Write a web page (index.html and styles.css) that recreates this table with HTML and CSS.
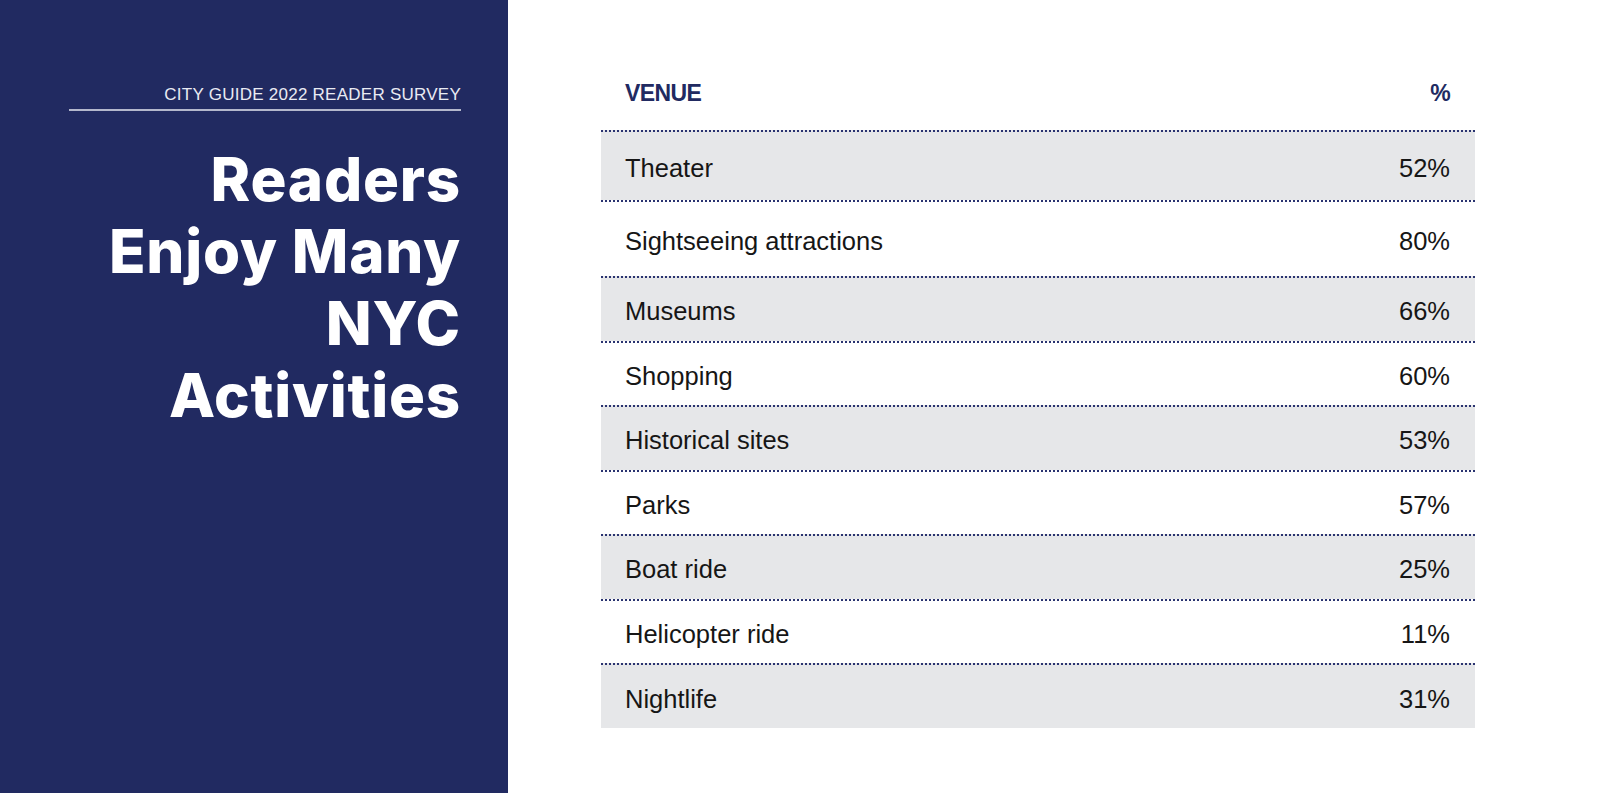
FILE: index.html
```html
<!DOCTYPE html>
<html lang="en">
<head>
<meta charset="utf-8">
<title>Readers Enjoy Many NYC Activities</title>
<link rel="stylesheet" href="styles.css">
</head>
<body>
<div class="page">
  <aside class="panel">
    <div class="kicker">CITY GUIDE 2022 READER SURVEY</div>
    <h1 class="title">Readers<br>Enjoy Many<br>NYC<br>Activities</h1>
  </aside>
  <main class="content">
    <div class="table">
      <div class="thead">
        <span>VENUE</span>
        <span>%</span>
      </div>
      <div class="row shade r1"><span>Theater</span><span>52%</span></div>
      <div class="row r2"><span>Sightseeing attractions</span><span>80%</span></div>
      <div class="row shade"><span>Museums</span><span>66%</span></div>
      <div class="row"><span>Shopping</span><span>60%</span></div>
      <div class="row shade"><span>Historical sites</span><span>53%</span></div>
      <div class="row"><span>Parks</span><span>57%</span></div>
      <div class="row shade"><span>Boat ride</span><span>25%</span></div>
      <div class="row"><span>Helicopter ride</span><span>11%</span></div>
      <div class="row shade last"><span>Nightlife</span><span>31%</span></div>
    </div>
  </main>
</div>
</body>
</html>
```

FILE: styles.css
```css
* { box-sizing: border-box; }
html, body { margin: 0; padding: 0; background: #ffffff; }
body { width: 1600px; height: 793px; overflow: hidden; }

.page {
  display: flex;
  height: 793px;
}

.panel {
  width: 508px;
  flex: none;
  background: #212a61;
  padding: 85px 47px 0 69px;
  display: flex;
  flex-direction: column;
  align-items: stretch;
  text-align: right;
}

.kicker {
  font-family: "Liberation Sans", Arial, sans-serif;
  font-size: 17px;
  line-height: 20px;
  letter-spacing: 0.25px;
  color: #e9ebf3;
  padding-bottom: 4px;
  border-bottom: 2px solid #b4b8cc;
}

.title {
  margin: 32px 0 0 0;
  font-family: "Inter", "Liberation Sans", sans-serif;
  font-weight: 800;
  font-size: 60px;
  line-height: 72px;
  color: #ffffff;
  letter-spacing: 0.8px;
}

.content {
  flex: 1;
  padding: 73px 0 0 93px;
}

.table {
  width: 874px;
  font-family: "Liberation Sans", Arial, sans-serif;
  color: #161616;
}

.thead {
  height: 57px;
  display: flex;
  justify-content: space-between;
  align-items: flex-start;
  padding: 0 25px 0 24px;
  font-weight: 700;
  font-size: 23px;
  line-height: 40px;
  letter-spacing: -0.6px;
  color: #212a61;
}

.row {
  height: 64.5px;
  display: flex;
  justify-content: space-between;
  align-items: center;
  padding: 4px 25px 0 24px;
  border-top: 2px dotted #2a3370;
  font-size: 25.5px;
  line-height: 26px;
}

.row.r1 { height: 70px; }
.row.r2 { height: 76px; }
.row.last { height: 65px; }

.shade { background: #e6e7e9; }
```
